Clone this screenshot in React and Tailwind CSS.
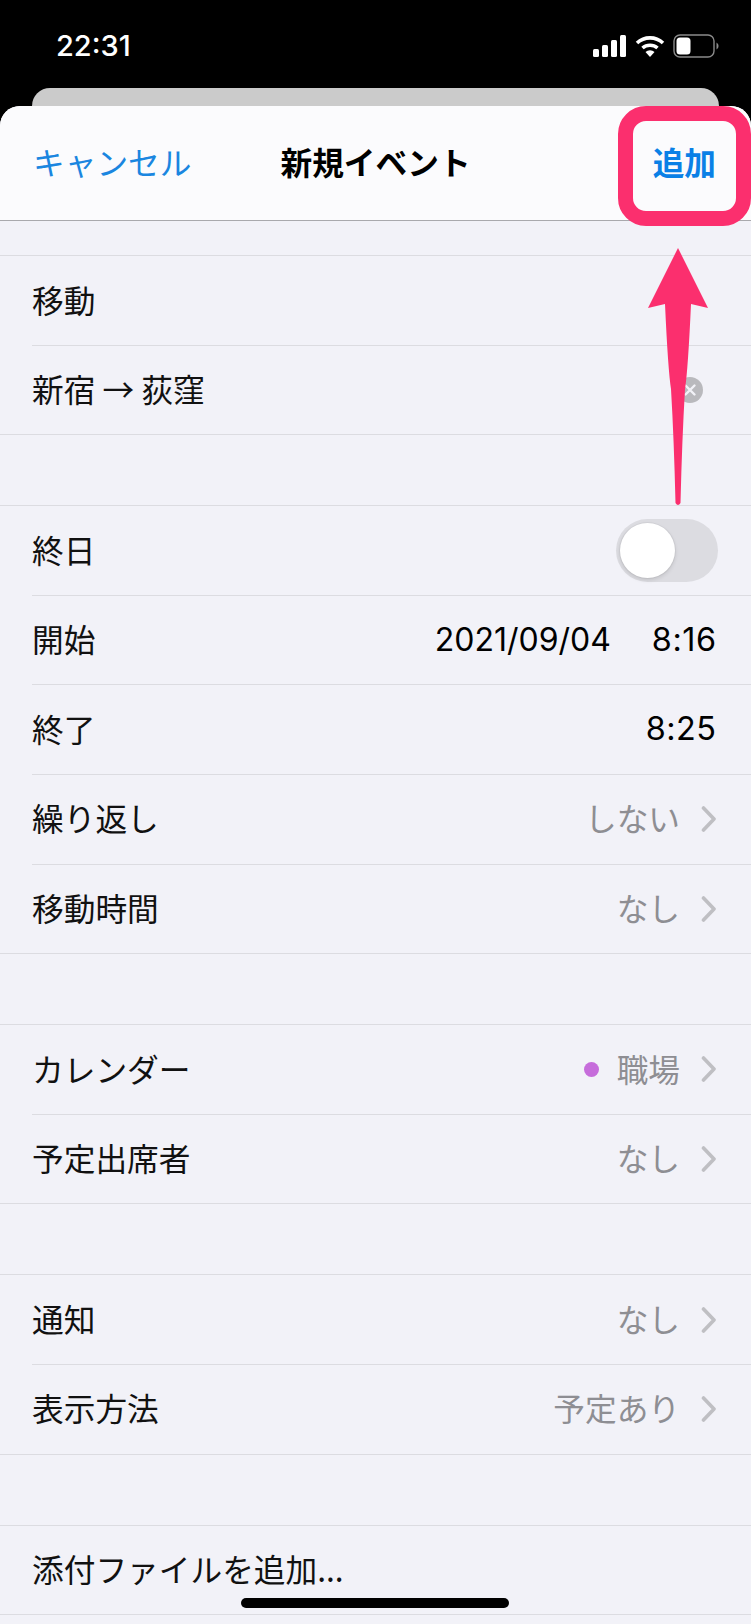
const FONT = { fontFamily: '"Noto Sans CJK JP", sans-serif' };

const GROUPS = [
  [{ label: "移動" }, { label: "新宿 → 荻窪", clear: true }],
  [
    { label: "終日", toggle: true },
    { label: "開始", date: "2021/09/04", time: "8:16" },
    { label: "終了", time: "8:25" },
    { label: "繰り返し", value: "しない" },
    { label: "移動時間", value: "なし" },
  ],
  [
    { label: "カレンダー", value: "職場", dot: true },
    { label: "予定出席者", value: "なし" },
  ],
  [
    { label: "通知", value: "なし" },
    { label: "表示方法", value: "予定あり" },
  ],
  [{ label: "添付ファイルを追加..." }],
];

function Chevron() {
  return (
    <svg width="16" height="26" viewBox="0 0 16 26" className="ml-[21px] mr-[1px]">
      <path d="M2.5 2 L13 13 L2.5 24" fill="none" stroke="#bfbfc3" strokeWidth="3.6" strokeLinecap="round" strokeLinejoin="round" />
    </svg>
  );
}

function Toggle() {
  return (
    <div className="w-[102px] h-[63px] rounded-full bg-[#dcdce1] p-[4px]">
      <div className="w-[55px] h-[55px] rounded-full bg-white shadow-[0_0_0_1px_rgba(0,0,0,0.04),0_2px_4px_rgba(0,0,0,0.12)]" />
    </div>
  );
}

function ClearButton() {
  return (
    <svg width="26" height="26" viewBox="0 0 26 26" className="mr-[15px]">
      <circle cx="13" cy="13" r="13" fill="#b9b9bd" />
      <path d="M8.5 8.5 L17.5 17.5 M17.5 8.5 L8.5 17.5" stroke="#f2f2f7" strokeWidth="2.4" strokeLinecap="round" />
    </svg>
  );
}

function Row({ row, first }) {
  return (
    <div className={`h-[89.6px] pl-[32px] ${first ? "border-t border-[#dcdce1]" : ""}`}>
      <div className={`h-full flex items-center justify-between pr-[33px] ${first ? "" : "border-t border-[#dcdce1]"}`}>
        <span className="text-[31.7px] text-[#111] pb-[2px]">{row.label}</span>
        <div className="flex items-center">
          {row.toggle && <Toggle />}
          {row.clear && <ClearButton />}
          {row.date && (
            <span className="text-[32px] text-black mr-[41px]" style={{ fontFamily: "Inter, sans-serif" }}>{row.date}</span>
          )}
          {row.time && (
            <span className="text-[32.4px] text-black tracking-[0.5px] pr-[1.5px]" style={{ fontFamily: "Inter, sans-serif" }}>{row.time}</span>
          )}
          {row.dot && <div className="w-[15px] h-[15px] rounded-full bg-[#c66ddb] mr-[18px]" />}
          {row.value && <span className="text-[31.7px] text-[#8e8e93] pb-[2px]">{row.value}</span>}
          {row.value && <Chevron />}
        </div>
      </div>
    </div>
  );
}

function StatusBar() {
  return (
    <div className="h-[88px] flex items-center justify-between pl-[56px] pr-[32px] pt-[3px]">
      <span className="text-white text-[29px] font-medium" style={{ fontFamily: "Inter, sans-serif" }}>22:31</span>
      <div className="flex items-center gap-[8px]">
        <svg width="34" height="22" viewBox="0 0 34 22">
          <rect x="0" y="14" width="6" height="8" rx="1.5" fill="#fff" />
          <rect x="9" y="10" width="6" height="12" rx="1.5" fill="#fff" />
          <rect x="18" y="5" width="6" height="17" rx="1.5" fill="#fff" />
          <rect x="27" y="0" width="6" height="22" rx="1.5" fill="#fff" />
        </svg>
        <svg width="30" height="22" viewBox="0 0 30 22">
          <path d="M2 8 A19 19 0 0 1 28 8" fill="none" stroke="#fff" strokeWidth="3.6" />
          <path d="M7.5 13 A11.5 11.5 0 0 1 22.5 13" fill="none" stroke="#fff" strokeWidth="3.6" />
          <path d="M15 22 L10.5 17 A6.5 6.5 0 0 1 19.5 17 Z" fill="#fff" />
        </svg>
        <svg width="46" height="24" viewBox="0 0 46 24">
          <rect x="1" y="1" width="40" height="22" rx="6" fill="none" stroke="#8a8a8a" strokeWidth="1.4" />
          <rect x="3.5" y="3.5" width="14" height="17" rx="3.5" fill="#fff" />
          <path d="M43.5 8.5 A4 4 0 0 1 43.5 15.5 Z" fill="#8a8a8a" />
        </svg>
      </div>
    </div>
  );
}

export default function App() {
  return (
    <div className="relative w-[751px] h-[1624px] overflow-hidden bg-black flex flex-col" style={FONT}>
      <StatusBar />
      <div className="h-[18px] mx-[32px] rounded-t-[18px] bg-[#cbcbcb] shrink-0" />

      {/* SHEET */}
      <div className="flex-1 rounded-t-[20px] overflow-hidden bg-[#f2f2f8]">
        <div className="h-[115px] bg-[#fbfbfd] border-b border-[#a9a9ad] grid grid-cols-[1fr_auto_1fr] items-center px-[33px]">
          <span className="text-[31.7px] text-[#1a86e0] pb-[3px]">キャンセル</span>
          <span className="text-[31.7px] font-bold text-black pb-[3px]">新規イベント</span>
          <span className="text-[31.7px] font-semibold text-[#0a80e6] text-right pr-[2px] pb-[3px]">追加</span>
        </div>

        <div className="pt-[34px]">
          {GROUPS.map((group, i) => (
            <div key={i} className="border-b border-[#dcdce1] mb-[70px]">
              {group.map((row, j) => (
                <Row key={row.label} row={row} first={j === 0} />
              ))}
            </div>
          ))}
        </div>
      </div>

      {/* ANNOTATION */}
      <div className="absolute left-[618px] top-[106px] w-[133px] h-[120px] rounded-[28px] border-[15px] border-[#fb2f6e]" />
      <svg width="751" height="1624" viewBox="0 0 751 1624" className="absolute left-0 top-0 pointer-events-none">
        <path d="M678 248 L708 308 L691 304 Q688 370 685 389 Q682 440 680.5 503 Q678 507 675.5 503 Q674 440 671 389 Q668 370 665 304 L648 308 Z" fill="#fb2f6e" />
      </svg>

      <div className="absolute left-[241px] top-[1598px] w-[268px] h-[10px] rounded-full bg-black" />
    </div>
  );
}
